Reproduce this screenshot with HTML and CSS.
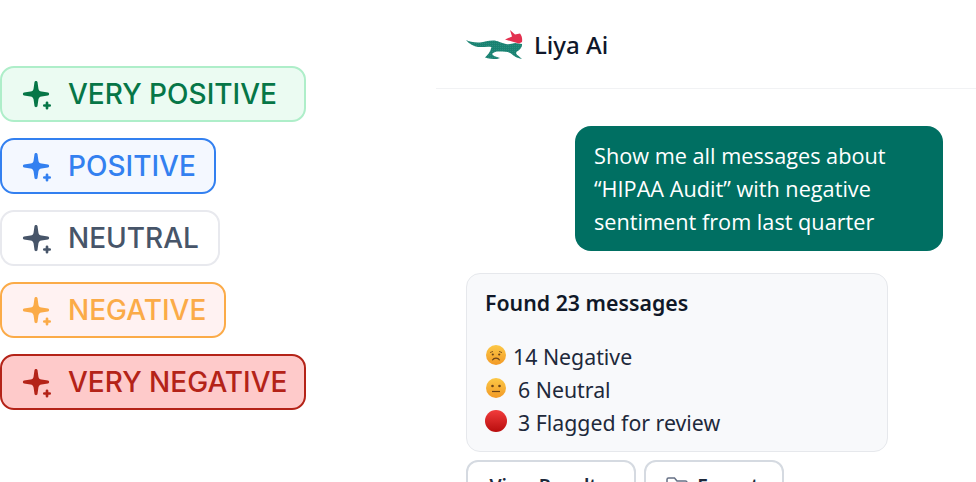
FILE: index.html
```html
<!DOCTYPE html>
<html lang="en">
<head>
  <meta charset="UTF-8">
  <meta name="viewport" content="width=device-width, initial-scale=1.0">
  <title>Liya Ai sentiment</title>
  <link rel="stylesheet" href="styles.css">
</head>
<body>
  <svg class="defs" width="0" height="0" aria-hidden="true">
    <symbol id="sparkle" viewBox="0 0 32 32">
      <path fill="currentColor" d="M13.500 4C13.700 2.500 16.300 2.500 16.500 4L17.400 10.500C17.600 12.300 18.700 13.400 20.500 13.600L27 14.500C28.500 14.700 28.500 17.300 27 17.500L20.500 18.400C18.700 18.600 17.600 19.700 17.400 21.500L16.500 28C16.300 29.500 13.700 29.500 13.500 28L12.600 21.500C12.400 19.700 11.300 18.600 9.500 18.400L3 17.500C1.500 17.300 1.500 14.700 3 14.500L9.500 13.600C11.300 13.400 12.400 12.300 12.600 10.500Z"/>
      <path fill="none" stroke="currentColor" stroke-width="2.700" stroke-linecap="round" d="M26 24.800v5.400M23.300 27.500h5.400"/>
    </symbol>
  </svg>

  <!-- Sentiment badges -->
  <section class="badges">
    <div class="badge very-positive"><svg class="spark"><use href="#sparkle"/></svg>Very Positive</div>
    <div class="badge positive"><svg class="spark"><use href="#sparkle"/></svg>Positive</div>
    <div class="badge neutral"><svg class="spark"><use href="#sparkle"/></svg>Neutral</div>
    <div class="badge negative"><svg class="spark"><use href="#sparkle"/></svg>Negative</div>
    <div class="badge very-negative"><svg class="spark"><use href="#sparkle"/></svg>Very Negative</div>
  </section>

  <!-- Chat panel -->
  <main class="chat">
    <header class="chat-header">
      <svg class="logo" viewBox="0 -2 57 30" aria-hidden="true">
        <defs>
          <pattern id="speckle" width="2" height="2" patternUnits="userSpaceOnUse">
            <rect width="2" height="2" fill="#1a8272"/>
            <circle cx=".6" cy=".6" r=".35" fill="#4fa897"/>
          </pattern>
        </defs>
        <path fill="url(#speckle)" d="M0 9C3 10.500 9 12 14 11.500C18 11 22 9.500 27 9.500C32 9.500 35 12 40 13C43 13.500 46 13 49 12L56 13C56.500 16 54 19 51 20.500C49.500 21.500 50 23 52 24.500L56 28C52 27.500 48 25.500 45 22.500C42 20.500 38 20.500 33 20.500C30 20.500 28 21 26 23L28 25L34 27L31 28C27 28 22 27.500 19 26.500C21.500 24 24.500 21 25.500 16C21 15 17 16.500 12 16C8 15.500 3 13 0 9Z"/>
        <path fill="#e3304f" d="M44 -1L49 3.500L54 2.500C56 5 56.500 8 56 11L53 12.500L46 10.500L39 8.500L46 5.500Z"/>
      </svg>
      <span class="brand">Liya Ai</span>
    </header>

    <div class="bubble">Show me all messages about “HIPAA Audit” with negative sentiment from last quarter</div>

    <div class="card">
      <h2 class="card-title">Found 23 messages</h2>
      <ul class="stats">
        <li>
          <svg class="emoji" viewBox="0 0 20 20" aria-hidden="true">
            <defs><linearGradient id="face" x1="0" y1="0" x2="0" y2="1"><stop offset="0" stop-color="#fcc846"/><stop offset="1" stop-color="#f29a26"/></linearGradient></defs>
            <circle cx="10" cy="10" r="10" fill="url(#face)"/>
            <path d="M4 7.600l3-1.200M16 7.600l-3-1.200" stroke="#8a5a1e" stroke-width="1" fill="none"/>
            <circle cx="6.800" cy="9.500" r="1.100" fill="#6b4318"/><circle cx="13.200" cy="9.500" r="1.100" fill="#6b4318"/>
            <path d="M6.300 15.200c1.800-2.800 5.600-2.800 7.400 0" stroke="#6b4318" stroke-width="1.200" fill="none"/>
          </svg>
          <span>14 Negative</span>
        </li>
        <li>
          <svg class="emoji" viewBox="0 0 20 20" aria-hidden="true">
            <circle cx="10" cy="10" r="10" fill="url(#face)"/>
            <circle cx="6.500" cy="8" r="1.300" fill="#6b4318"/><circle cx="13.500" cy="8" r="1.300" fill="#6b4318"/>
            <path d="M6 13.500h8" stroke="#6b4318" stroke-width="1.200"/>
          </svg>
          <span class="pad">6 Neutral</span>
        </li>
        <li>
          <svg class="emoji emoji-dot" viewBox="0 0 22 22" aria-hidden="true">
            <defs><linearGradient id="red" x1="0" y1="0" x2="0" y2="1"><stop offset="0" stop-color="#f23c3c"/><stop offset="1" stop-color="#b80d0d"/></linearGradient></defs>
            <circle cx="11" cy="11" r="11" fill="url(#red)"/>
          </svg>
          <span class="pad">3 Flagged for review</span>
        </li>
      </ul>
    </div>

    <div class="actions">
      <button class="action action-view">View Results</button>
      <button class="action action-export">
        <svg class="folder" viewBox="0 0 24 24" aria-hidden="true"><path d="M2 5.500C2 4.700 2.700 4 3.500 4h6l2.500 3h8.500c.8 0 1.500.7 1.500 1.500v10c0 .8-.7 1.500-1.500 1.500h-17C2.700 20 2 19.300 2 18.500z"/></svg>
        Export
      </button>
    </div>
  </main>
</body>
</html>
```

FILE: styles.css
```css
/* Basic page styling */
html, body {
  height: 100%;
}

body {
  margin: 0;
  display: flex;
  overflow: hidden;
  background-color: #ffffff;
  font-family: "Open Sans", "Noto Sans", sans-serif;
  color: #111827;
}

.defs {
  position: absolute;
}

/* Badges */
.badges {
  width: 436px;
  flex-shrink: 0;
  padding-top: 66px;
  display: flex;
  flex-direction: column;
  align-items: flex-start;
  gap: 16px;
}

.badge {
  box-sizing: border-box;
  height: 56px;
  display: flex;
  align-items: center;
  gap: 15px;
  padding: 0 0 0 19px;
  border: 2px solid;
  border-radius: 14px;
  font-family: Inter, "Liberation Sans", sans-serif;
  font-size: 28px;
  font-weight: 450;
  text-transform: uppercase;
}

.spark {
  width: 32px;
  height: 32px;
  flex-shrink: 0;
}

.very-positive {
  width: 306px;
  background-color: #ebfbf2;
  border-color: #aeeec9;
  color: #067647;
}

.positive {
  width: 216px;
  background-color: #f4f8ff;
  border-color: #3380f0;
  color: #3380f0;
}

.neutral {
  width: 220px;
  background-color: #ffffff;
  border-color: #e8e9ee;
  color: #475569;
}

.negative {
  width: 226px;
  background-color: #fff2f2;
  border-color: #fbab48;
  color: #fbab48;
}

.very-negative {
  width: 306px;
  background-color: #fecaca;
  border-color: #b42318;
  color: #b42318;
}

/* Chat */
.chat {
  flex: 1;
  display: flex;
  flex-direction: column;
  min-width: 0;
}

.chat-header {
  height: 89px;
  flex-shrink: 0;
  display: flex;
  align-items: center;
  gap: 11px;
  padding-left: 30px;
  box-sizing: border-box;
  border-bottom: 1px solid #f1f2f4;
}

.logo {
  width: 57px;
  height: 30px;
}

.brand {
  font-family: "Noto Sans", sans-serif;
  font-size: 24px;
  font-weight: 500;
  color: #0f172a;
}

.bubble {
  box-sizing: border-box;
  width: 368px;
  height: 125px;
  margin: 37px 0 22px 139px;
  padding: 13px 19px;
  border-radius: 16px;
  background-color: #006f62;
  color: #ffffff;
  font-size: 21.700px;
  line-height: 33px;
}

.card {
  box-sizing: border-box;
  width: 422px;
  height: 179px;
  flex-shrink: 0;
  margin-left: 30px;
  padding: 14px 19px;
  border: 1px solid #e6e8ec;
  border-radius: 14px;
  background-color: #f8f9fb;
}

.card-title {
  margin: 0 0 22px -1px;
  font-family: "Noto Sans", sans-serif;
  font-size: 21.300px;
  line-height: 30px;
  font-weight: 600;
  color: #101828;
}

.stats {
  list-style: none;
  margin: 0;
  padding: 0;
  font-family: "Noto Sans", sans-serif;
  font-size: 21.300px;
  line-height: 33px;
  color: #1e293b;
}

.stats li {
  display: flex;
  align-items: center;
  gap: 7px;
}

.emoji {
  width: 20px;
  height: 20px;
  flex-shrink: 0;
  margin-top: -3px;
}

.emoji-dot {
  width: 22px;
  height: 22px;
  margin: -4px -1px 0 -1px;
}

.pad {
  margin-left: 5px;
}

.actions {
  display: flex;
  gap: 8px;
  margin: 8px 0 0 30px;
}

.action {
  box-sizing: border-box;
  height: 51px;
  display: flex;
  align-items: center;
  justify-content: center;
  gap: 8px;
  flex-shrink: 0;
  padding: 0;
  border: 2px solid #d5dae1;
  border-radius: 12px;
  background-color: #ffffff;
  font-family: "Noto Sans", sans-serif;
  font-size: 19.200px;
  font-weight: 600;
  color: #1e293b;
}

.action-view {
  width: 170px;
  padding-right: 6px;
}

.action-export {
  width: 140px;
  padding-right: 4px;
}

.folder {
  width: 24px;
  height: 24px;
  fill: none;
  stroke: #667085;
  stroke-width: 1.500;
}
```
